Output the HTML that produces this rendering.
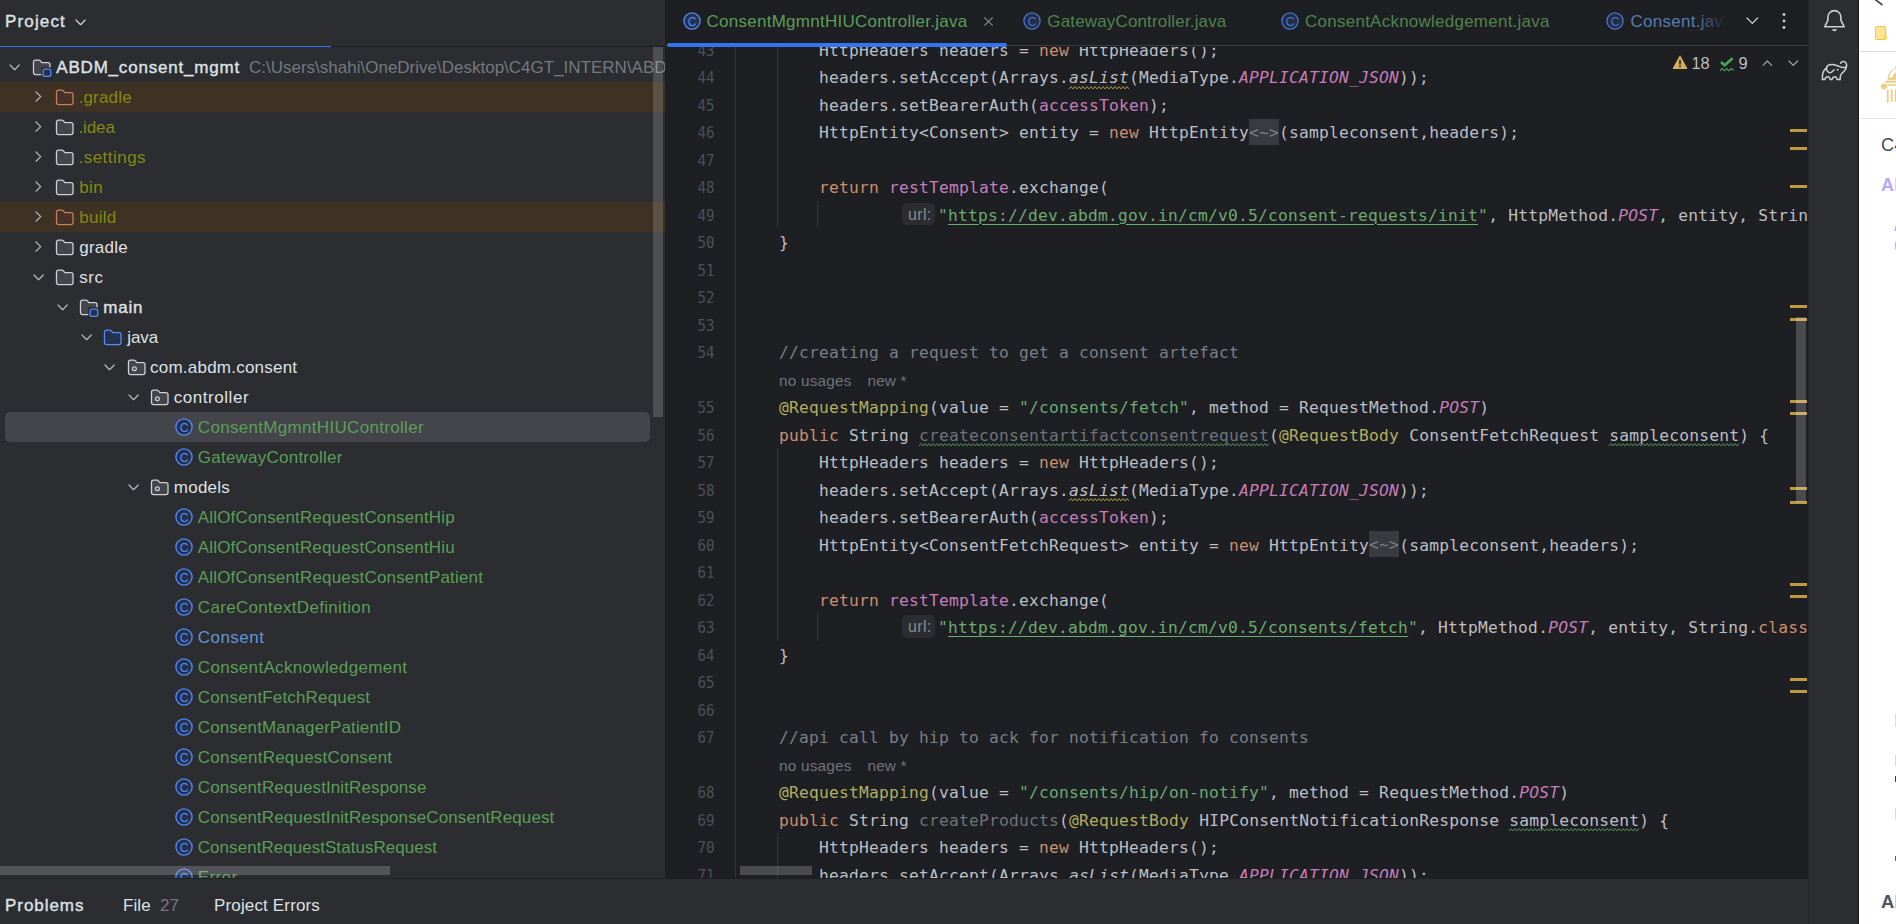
<!DOCTYPE html>
<html lang="en"><head><meta charset="utf-8"><title>ABDM_consent_mgmt</title>
<style>
*{box-sizing:border-box}
html,body{margin:0;padding:0;width:1896px;height:924px;overflow:hidden;background:#2b2d30}
body{position:relative;font-family:"Liberation Sans", "DejaVu Sans", sans-serif;font-size:17px;color:#dfe1e5;letter-spacing:.2px}
.abs{position:absolute}
#left{position:absolute;left:0;top:0;width:665px;height:879px;background:#2b2d30;overflow:hidden}
#split{position:absolute;left:665px;top:0;width:1px;height:879px;background:#1e1f22}
#editor{position:absolute;left:666px;top:0;width:1142px;height:879px;background:#1e1f22;overflow:hidden}
#strip{position:absolute;left:1808px;top:0;width:51px;height:924px;background:#2b2d30;border-left:1px solid #222427;border-right:1px solid #1e1f22}
#white{position:absolute;left:1859px;top:0;width:37px;height:924px;background:#fff;overflow:hidden}
#bottom{position:absolute;left:0;top:878px;width:1808px;height:46px;background:#2b2d30;border-top:1px solid #1e1f22}
.row{position:absolute;left:0;width:653px;height:30px;line-height:30px;white-space:nowrap}
.row .t{position:absolute;top:1px}
.row svg{position:absolute}
.code{position:absolute;left:73px;height:27.5px;line-height:27.5px;white-space:pre;font-family:"DejaVu Sans Mono", "Liberation Mono", monospace;font-size:16.25px;letter-spacing:.218px;color:#bcbec4;padding-top:1px}
.ln{position:absolute;left:0;width:48.3px;text-align:right;height:27.5px;line-height:27.5px;font-family:"DejaVu Sans Mono", "Liberation Mono", monospace;font-size:16.25px;letter-spacing:-.2px;color:#4b5059;padding-top:1px;transform:scaleX(.87);transform-origin:100% 50%}
.k{color:#cf8e6d} .s{color:#6aab73} .c{color:#7a7e85} .a{color:#b3ae60} .f{color:#c77dbb}
.fi{color:#c77dbb;font-style:italic} .i{font-style:italic} .u{color:#6f737a}
.url{text-decoration:underline;text-decoration-thickness:1px;text-underline-offset:3px}
.wy{text-decoration:underline wavy #b8a13f;text-decoration-thickness:1px;text-underline-offset:3px}
.wg{text-decoration:underline wavy #5d9c60;text-decoration-thickness:1px;text-underline-offset:3px}
.w{position:relative} .wv{position:absolute;left:0;top:17.6px;overflow:visible}
.fold{background:#393b40;color:#7a7e85;padding:4.2px 0 2.6px}
.hint{display:inline-block;width:33.4px;height:22.4px;line-height:24.6px;vertical-align:top;margin-top:1.4px;background:#2b2d30;color:#868a91;border-radius:5px;font-family:"Liberation Sans", "DejaVu Sans", sans-serif;font-size:16px;letter-spacing:.35px;padding:0 0 0 6.5px;margin-right:3.1px;margin-left:2.5px}
.inlay{position:absolute;left:113px;height:27.5px;line-height:27.5px;white-space:pre;font-family:"Liberation Sans", "DejaVu Sans", sans-serif;font-size:15.4px;letter-spacing:.18px;color:#6f737a;padding-top:1px}
.guide{position:absolute;width:1px;background:#313438}
.mark{position:absolute;left:1124px;width:17px;height:3px;background:#be9a45}
.tab{position:absolute;top:1px;height:43px;line-height:42px;white-space:nowrap;font-size:17px}
</style></head>
<body>
<div id="left">
<div class="abs" style="left:5px;top:1px;height:42px;line-height:42px;-webkit-text-stroke:.38px #dfe1e5;letter-spacing:1.15px;color:#dfe1e5">Project</div>
<svg class="abs" style="left:73.60px;top:17.75px" width="13.20" height="8.70" viewBox="-2 -2 13.20 8.70"><path d="M0 0 L4.60 4.70 L9.20 0" fill="none" stroke="#ced0d6" stroke-width="1.25" stroke-linecap="round" stroke-linejoin="round"/></svg>
<div class="abs" style="left:0;top:46px;width:665px;height:1px;background:#1e1f22"></div>
<div class="abs" style="left:0;top:45.5px;width:331px;height:1.5px;background:#3574f0"></div>
<div class="row" style="top:52px">
<svg class="abs" style="left:8.30px;top:10.65px" width="13.20" height="8.70" viewBox="-2 -2 13.20 8.70"><path d="M0 0 L4.60 4.70 L9.20 0" fill="none" stroke="#b4b8bf" stroke-width="1.25" stroke-linecap="round" stroke-linejoin="round"/></svg>
<svg style="left:31.15px;top:5.5px" width="22" height="20" viewBox="0 0 22 20"><path transform="translate(1,1)" d="M1.5 3.2 Q1.5 1.2 3.5 1.2 L7 1.2 Q7.8 1.2 8.4 1.9 L9.9 3.7 L16 3.7 Q18 3.7 18 5.7 L18 13.6 Q18 15.6 16 15.6 L3.5 15.6 Q1.5 15.6 1.5 13.6 Z" fill="#43454a" stroke="#ced0d6" stroke-width="1.3" stroke-linejoin="round"/><rect x="10.3" y="9.3" width="11" height="10.4" fill="#2b2d30"/><rect x="12.2" y="11.2" width="7.6" height="7.2" rx="2" fill="#25324d" stroke="#548af7" stroke-width="1.3"/></svg>
<span class="t" style="left:56.30px;color:#dfe1e5;-webkit-text-stroke:.38px #dfe1e5;letter-spacing:.8px;">ABDM_consent_mgmt</span>
<span class="t" style="left:249px;color:#757980;letter-spacing:0">C:\Users\shahi\OneDrive\Desktop\C4GT_INTERN\ABDM_consent_mgmt</span>
</div>
<div class="abs" style="left:0;top:82px;width:665px;height:30px;background:#3d3223"></div>
<div class="row" style="top:82px">
<svg class="abs" style="left:34.45px;top:8.40px" width="8.70" height="13.20" viewBox="-2 -2 8.70 13.20"><path d="M0 0 L4.70 4.60 L0 9.20" fill="none" stroke="#b4b8bf" stroke-width="1.25" stroke-linecap="round" stroke-linejoin="round"/></svg>
<svg style="left:54.95px;top:6.5px" width="20" height="17" viewBox="0 0 20 17"><path d="M1.5 3.2 Q1.5 1.2 3.5 1.2 L7 1.2 Q7.8 1.2 8.4 1.9 L9.9 3.7 L16 3.7 Q18 3.7 18 5.7 L18 13.6 Q18 15.6 16 15.6 L3.5 15.6 Q1.5 15.6 1.5 13.6 Z" fill="#45322b" stroke="#c77d55" stroke-width="1.3" stroke-linejoin="round"/></svg>
<span class="t" style="left:78.50px;color:#868714;letter-spacing:0.186px;">.gradle</span>
</div>
<div class="row" style="top:112px">
<svg class="abs" style="left:34.45px;top:8.40px" width="8.70" height="13.20" viewBox="-2 -2 8.70 13.20"><path d="M0 0 L4.70 4.60 L0 9.20" fill="none" stroke="#b4b8bf" stroke-width="1.25" stroke-linecap="round" stroke-linejoin="round"/></svg>
<svg style="left:54.95px;top:6.5px" width="20" height="17" viewBox="0 0 20 17"><path d="M1.5 3.2 Q1.5 1.2 3.5 1.2 L7 1.2 Q7.8 1.2 8.4 1.9 L9.9 3.7 L16 3.7 Q18 3.7 18 5.7 L18 13.6 Q18 15.6 16 15.6 L3.5 15.6 Q1.5 15.6 1.5 13.6 Z" fill="#43454a" stroke="#ced0d6" stroke-width="1.3" stroke-linejoin="round"/></svg>
<span class="t" style="left:78.50px;color:#868714;letter-spacing:-0.119px;">.idea</span>
</div>
<div class="row" style="top:142px">
<svg class="abs" style="left:34.45px;top:8.40px" width="8.70" height="13.20" viewBox="-2 -2 8.70 13.20"><path d="M0 0 L4.70 4.60 L0 9.20" fill="none" stroke="#b4b8bf" stroke-width="1.25" stroke-linecap="round" stroke-linejoin="round"/></svg>
<svg style="left:54.95px;top:6.5px" width="20" height="17" viewBox="0 0 20 17"><path d="M1.5 3.2 Q1.5 1.2 3.5 1.2 L7 1.2 Q7.8 1.2 8.4 1.9 L9.9 3.7 L16 3.7 Q18 3.7 18 5.7 L18 13.6 Q18 15.6 16 15.6 L3.5 15.6 Q1.5 15.6 1.5 13.6 Z" fill="#43454a" stroke="#ced0d6" stroke-width="1.3" stroke-linejoin="round"/></svg>
<span class="t" style="left:78.50px;color:#868714;letter-spacing:0.473px;">.settings</span>
</div>
<div class="row" style="top:172px">
<svg class="abs" style="left:34.45px;top:8.40px" width="8.70" height="13.20" viewBox="-2 -2 8.70 13.20"><path d="M0 0 L4.70 4.60 L0 9.20" fill="none" stroke="#b4b8bf" stroke-width="1.25" stroke-linecap="round" stroke-linejoin="round"/></svg>
<svg style="left:54.95px;top:6.5px" width="20" height="17" viewBox="0 0 20 17"><path d="M1.5 3.2 Q1.5 1.2 3.5 1.2 L7 1.2 Q7.8 1.2 8.4 1.9 L9.9 3.7 L16 3.7 Q18 3.7 18 5.7 L18 13.6 Q18 15.6 16 15.6 L3.5 15.6 Q1.5 15.6 1.5 13.6 Z" fill="#43454a" stroke="#ced0d6" stroke-width="1.3" stroke-linejoin="round"/></svg>
<span class="t" style="left:79.30px;color:#868714;letter-spacing:0.306px;">bin</span>
</div>
<div class="abs" style="left:0;top:202px;width:665px;height:30px;background:#3d3223"></div>
<div class="row" style="top:202px">
<svg class="abs" style="left:34.45px;top:8.40px" width="8.70" height="13.20" viewBox="-2 -2 8.70 13.20"><path d="M0 0 L4.70 4.60 L0 9.20" fill="none" stroke="#b4b8bf" stroke-width="1.25" stroke-linecap="round" stroke-linejoin="round"/></svg>
<svg style="left:54.95px;top:6.5px" width="20" height="17" viewBox="0 0 20 17"><path d="M1.5 3.2 Q1.5 1.2 3.5 1.2 L7 1.2 Q7.8 1.2 8.4 1.9 L9.9 3.7 L16 3.7 Q18 3.7 18 5.7 L18 13.6 Q18 15.6 16 15.6 L3.5 15.6 Q1.5 15.6 1.5 13.6 Z" fill="#45322b" stroke="#c77d55" stroke-width="1.3" stroke-linejoin="round"/></svg>
<span class="t" style="left:79.30px;color:#868714;letter-spacing:0.22px;">build</span>
</div>
<div class="row" style="top:232px">
<svg class="abs" style="left:34.45px;top:8.40px" width="8.70" height="13.20" viewBox="-2 -2 8.70 13.20"><path d="M0 0 L4.70 4.60 L0 9.20" fill="none" stroke="#b4b8bf" stroke-width="1.25" stroke-linecap="round" stroke-linejoin="round"/></svg>
<svg style="left:54.95px;top:6.5px" width="20" height="17" viewBox="0 0 20 17"><path d="M1.5 3.2 Q1.5 1.2 3.5 1.2 L7 1.2 Q7.8 1.2 8.4 1.9 L9.9 3.7 L16 3.7 Q18 3.7 18 5.7 L18 13.6 Q18 15.6 16 15.6 L3.5 15.6 Q1.5 15.6 1.5 13.6 Z" fill="#43454a" stroke="#ced0d6" stroke-width="1.3" stroke-linejoin="round"/></svg>
<span class="t" style="left:79.30px;color:#dfe1e5;letter-spacing:0.207px;">gradle</span>
</div>
<div class="row" style="top:262px">
<svg class="abs" style="left:32.20px;top:10.65px" width="13.20" height="8.70" viewBox="-2 -2 13.20 8.70"><path d="M0 0 L4.60 4.70 L9.20 0" fill="none" stroke="#b4b8bf" stroke-width="1.25" stroke-linecap="round" stroke-linejoin="round"/></svg>
<svg style="left:54.95px;top:6.5px" width="20" height="17" viewBox="0 0 20 17"><path d="M1.5 3.2 Q1.5 1.2 3.5 1.2 L7 1.2 Q7.8 1.2 8.4 1.9 L9.9 3.7 L16 3.7 Q18 3.7 18 5.7 L18 13.6 Q18 15.6 16 15.6 L3.5 15.6 Q1.5 15.6 1.5 13.6 Z" fill="#43454a" stroke="#ced0d6" stroke-width="1.3" stroke-linejoin="round"/></svg>
<span class="t" style="left:79.30px;color:#dfe1e5;letter-spacing:0.564px;">src</span>
</div>
<div class="row" style="top:292px">
<svg class="abs" style="left:56.30px;top:10.65px" width="13.20" height="8.70" viewBox="-2 -2 13.20 8.70"><path d="M0 0 L4.60 4.70 L9.20 0" fill="none" stroke="#b4b8bf" stroke-width="1.25" stroke-linecap="round" stroke-linejoin="round"/></svg>
<svg style="left:78.05px;top:5.5px" width="22" height="20" viewBox="0 0 22 20"><path transform="translate(1,1)" d="M1.5 3.2 Q1.5 1.2 3.5 1.2 L7 1.2 Q7.8 1.2 8.4 1.9 L9.9 3.7 L16 3.7 Q18 3.7 18 5.7 L18 13.6 Q18 15.6 16 15.6 L3.5 15.6 Q1.5 15.6 1.5 13.6 Z" fill="#43454a" stroke="#ced0d6" stroke-width="1.3" stroke-linejoin="round"/><rect x="10.3" y="9.3" width="11" height="10.4" fill="#2b2d30"/><rect x="12.2" y="11.2" width="7.6" height="7.2" rx="2" fill="#25324d" stroke="#548af7" stroke-width="1.3"/></svg>
<span class="t" style="left:103.30px;color:#dfe1e5;-webkit-text-stroke:.38px #dfe1e5;letter-spacing:.8px;">main</span>
</div>
<div class="row" style="top:322px">
<svg class="abs" style="left:80.30px;top:10.65px" width="13.20" height="8.70" viewBox="-2 -2 13.20 8.70"><path d="M0 0 L4.60 4.70 L9.20 0" fill="none" stroke="#b4b8bf" stroke-width="1.25" stroke-linecap="round" stroke-linejoin="round"/></svg>
<svg style="left:103.15px;top:6.5px" width="20" height="17" viewBox="0 0 20 17"><path d="M1.5 3.2 Q1.5 1.2 3.5 1.2 L7 1.2 Q7.8 1.2 8.4 1.9 L9.9 3.7 L16 3.7 Q18 3.7 18 5.7 L18 13.6 Q18 15.6 16 15.6 L3.5 15.6 Q1.5 15.6 1.5 13.6 Z" fill="#25324d" stroke="#548af7" stroke-width="1.3" stroke-linejoin="round"/></svg>
<span class="t" style="left:127.30px;color:#dfe1e5;letter-spacing:-0.129px;">java</span>
</div>
<div class="row" style="top:352px">
<svg class="abs" style="left:103.40px;top:10.65px" width="13.20" height="8.70" viewBox="-2 -2 13.20 8.70"><path d="M0 0 L4.60 4.70 L9.20 0" fill="none" stroke="#b4b8bf" stroke-width="1.25" stroke-linecap="round" stroke-linejoin="round"/></svg>
<svg style="left:127.05px;top:6.5px" width="20" height="17" viewBox="0 0 20 17"><path d="M1.5 3.2 Q1.5 1.2 3.5 1.2 L7 1.2 Q7.8 1.2 8.4 1.9 L9.9 3.7 L16 3.7 Q18 3.7 18 5.7 L18 13.6 Q18 15.6 16 15.6 L3.5 15.6 Q1.5 15.6 1.5 13.6 Z" fill="#43454a" stroke="#ced0d6" stroke-width="1.3" stroke-linejoin="round"/><circle cx="7.4" cy="9.7" r="1.9" fill="none" stroke="#ced0d6" stroke-width="1.25"/></svg>
<span class="t" style="left:150.00px;color:#dfe1e5;letter-spacing:0.231px;">com.abdm.consent</span>
</div>
<div class="row" style="top:382px">
<svg class="abs" style="left:127.40px;top:10.65px" width="13.20" height="8.70" viewBox="-2 -2 13.20 8.70"><path d="M0 0 L4.60 4.70 L9.20 0" fill="none" stroke="#b4b8bf" stroke-width="1.25" stroke-linecap="round" stroke-linejoin="round"/></svg>
<svg style="left:150.05px;top:6.5px" width="20" height="17" viewBox="0 0 20 17"><path d="M1.5 3.2 Q1.5 1.2 3.5 1.2 L7 1.2 Q7.8 1.2 8.4 1.9 L9.9 3.7 L16 3.7 Q18 3.7 18 5.7 L18 13.6 Q18 15.6 16 15.6 L3.5 15.6 Q1.5 15.6 1.5 13.6 Z" fill="#43454a" stroke="#ced0d6" stroke-width="1.3" stroke-linejoin="round"/><circle cx="7.4" cy="9.7" r="1.9" fill="none" stroke="#ced0d6" stroke-width="1.25"/></svg>
<span class="t" style="left:173.80px;color:#dfe1e5;letter-spacing:0.542px;">controller</span>
</div>
<div class="abs" style="left:5px;top:412px;width:645px;height:30px;background:#43454a;border-radius:5px"></div>
<div class="row" style="top:412px">
<svg style="left:173.64999999999998px;top:5px" width="20" height="20" viewBox="0 0 20 20"><circle cx="10" cy="10" r="8.1" fill="#25324d" stroke="#548af7" stroke-width="1.3"/><text x="10.2" y="14.6" text-anchor="middle" font-family='"Liberation Sans", sans-serif' font-size="12.2" fill="#548af7" letter-spacing="0">C</text></svg>
<span class="t" style="left:197.80px;color:#5c9d58;letter-spacing:0.315px;">ConsentMgmntHIUController</span>
</div>
<div class="row" style="top:442px">
<svg style="left:173.64999999999998px;top:5px" width="20" height="20" viewBox="0 0 20 20"><circle cx="10" cy="10" r="8.1" fill="#25324d" stroke="#548af7" stroke-width="1.3"/><text x="10.2" y="14.6" text-anchor="middle" font-family='"Liberation Sans", sans-serif' font-size="12.2" fill="#548af7" letter-spacing="0">C</text></svg>
<span class="t" style="left:197.80px;color:#5c9d58;letter-spacing:0.232px;">GatewayController</span>
</div>
<div class="row" style="top:472px">
<svg class="abs" style="left:127.40px;top:10.65px" width="13.20" height="8.70" viewBox="-2 -2 13.20 8.70"><path d="M0 0 L4.60 4.70 L9.20 0" fill="none" stroke="#b4b8bf" stroke-width="1.25" stroke-linecap="round" stroke-linejoin="round"/></svg>
<svg style="left:150.05px;top:6.5px" width="20" height="17" viewBox="0 0 20 17"><path d="M1.5 3.2 Q1.5 1.2 3.5 1.2 L7 1.2 Q7.8 1.2 8.4 1.9 L9.9 3.7 L16 3.7 Q18 3.7 18 5.7 L18 13.6 Q18 15.6 16 15.6 L3.5 15.6 Q1.5 15.6 1.5 13.6 Z" fill="#43454a" stroke="#ced0d6" stroke-width="1.3" stroke-linejoin="round"/><circle cx="7.4" cy="9.7" r="1.9" fill="none" stroke="#ced0d6" stroke-width="1.25"/></svg>
<span class="t" style="left:173.80px;color:#dfe1e5;letter-spacing:0.237px;">models</span>
</div>
<div class="row" style="top:502px">
<svg style="left:173.64999999999998px;top:5px" width="20" height="20" viewBox="0 0 20 20"><circle cx="10" cy="10" r="8.1" fill="#25324d" stroke="#548af7" stroke-width="1.3"/><text x="10.2" y="14.6" text-anchor="middle" font-family='"Liberation Sans", sans-serif' font-size="12.2" fill="#548af7" letter-spacing="0">C</text></svg>
<span class="t" style="left:197.80px;color:#5c9d58;letter-spacing:0.164px;">AllOfConsentRequestConsentHip</span>
</div>
<div class="row" style="top:532px">
<svg style="left:173.64999999999998px;top:5px" width="20" height="20" viewBox="0 0 20 20"><circle cx="10" cy="10" r="8.1" fill="#25324d" stroke="#548af7" stroke-width="1.3"/><text x="10.2" y="14.6" text-anchor="middle" font-family='"Liberation Sans", sans-serif' font-size="12.2" fill="#548af7" letter-spacing="0">C</text></svg>
<span class="t" style="left:197.80px;color:#5c9d58;letter-spacing:0.164px;">AllOfConsentRequestConsentHiu</span>
</div>
<div class="row" style="top:562px">
<svg style="left:173.64999999999998px;top:5px" width="20" height="20" viewBox="0 0 20 20"><circle cx="10" cy="10" r="8.1" fill="#25324d" stroke="#548af7" stroke-width="1.3"/><text x="10.2" y="14.6" text-anchor="middle" font-family='"Liberation Sans", sans-serif' font-size="12.2" fill="#548af7" letter-spacing="0">C</text></svg>
<span class="t" style="left:197.80px;color:#5c9d58;letter-spacing:0.168px;">AllOfConsentRequestConsentPatient</span>
</div>
<div class="row" style="top:592px">
<svg style="left:173.64999999999998px;top:5px" width="20" height="20" viewBox="0 0 20 20"><circle cx="10" cy="10" r="8.1" fill="#25324d" stroke="#548af7" stroke-width="1.3"/><text x="10.2" y="14.6" text-anchor="middle" font-family='"Liberation Sans", sans-serif' font-size="12.2" fill="#548af7" letter-spacing="0">C</text></svg>
<span class="t" style="left:197.80px;color:#5c9d58;letter-spacing:0.324px;">CareContextDefinition</span>
</div>
<div class="row" style="top:622px">
<svg style="left:173.64999999999998px;top:5px" width="20" height="20" viewBox="0 0 20 20"><circle cx="10" cy="10" r="8.1" fill="#25324d" stroke="#548af7" stroke-width="1.3"/><text x="10.2" y="14.6" text-anchor="middle" font-family='"Liberation Sans", sans-serif' font-size="12.2" fill="#548af7" letter-spacing="0">C</text></svg>
<span class="t" style="left:197.80px;color:#6595d1;letter-spacing:0.462px;">Consent</span>
</div>
<div class="row" style="top:652px">
<svg style="left:173.64999999999998px;top:5px" width="20" height="20" viewBox="0 0 20 20"><circle cx="10" cy="10" r="8.1" fill="#25324d" stroke="#548af7" stroke-width="1.3"/><text x="10.2" y="14.6" text-anchor="middle" font-family='"Liberation Sans", sans-serif' font-size="12.2" fill="#548af7" letter-spacing="0">C</text></svg>
<span class="t" style="left:197.80px;color:#5c9d58;letter-spacing:0.332px;">ConsentAcknowledgement</span>
</div>
<div class="row" style="top:682px">
<svg style="left:173.64999999999998px;top:5px" width="20" height="20" viewBox="0 0 20 20"><circle cx="10" cy="10" r="8.1" fill="#25324d" stroke="#548af7" stroke-width="1.3"/><text x="10.2" y="14.6" text-anchor="middle" font-family='"Liberation Sans", sans-serif' font-size="12.2" fill="#548af7" letter-spacing="0">C</text></svg>
<span class="t" style="left:197.80px;color:#5c9d58;letter-spacing:0.164px;">ConsentFetchRequest</span>
</div>
<div class="row" style="top:712px">
<svg style="left:173.64999999999998px;top:5px" width="20" height="20" viewBox="0 0 20 20"><circle cx="10" cy="10" r="8.1" fill="#25324d" stroke="#548af7" stroke-width="1.3"/><text x="10.2" y="14.6" text-anchor="middle" font-family='"Liberation Sans", sans-serif' font-size="12.2" fill="#548af7" letter-spacing="0">C</text></svg>
<span class="t" style="left:197.80px;color:#5c9d58;letter-spacing:0.13px;">ConsentManagerPatientID</span>
</div>
<div class="row" style="top:742px">
<svg style="left:173.64999999999998px;top:5px" width="20" height="20" viewBox="0 0 20 20"><circle cx="10" cy="10" r="8.1" fill="#25324d" stroke="#548af7" stroke-width="1.3"/><text x="10.2" y="14.6" text-anchor="middle" font-family='"Liberation Sans", sans-serif' font-size="12.2" fill="#548af7" letter-spacing="0">C</text></svg>
<span class="t" style="left:197.80px;color:#5c9d58;letter-spacing:0.217px;">ConsentRequestConsent</span>
</div>
<div class="row" style="top:772px">
<svg style="left:173.64999999999998px;top:5px" width="20" height="20" viewBox="0 0 20 20"><circle cx="10" cy="10" r="8.1" fill="#25324d" stroke="#548af7" stroke-width="1.3"/><text x="10.2" y="14.6" text-anchor="middle" font-family='"Liberation Sans", sans-serif' font-size="12.2" fill="#548af7" letter-spacing="0">C</text></svg>
<span class="t" style="left:197.80px;color:#5c9d58;letter-spacing:0.109px;">ConsentRequestInitResponse</span>
</div>
<div class="row" style="top:802px">
<svg style="left:173.64999999999998px;top:5px" width="20" height="20" viewBox="0 0 20 20"><circle cx="10" cy="10" r="8.1" fill="#25324d" stroke="#548af7" stroke-width="1.3"/><text x="10.2" y="14.6" text-anchor="middle" font-family='"Liberation Sans", sans-serif' font-size="12.2" fill="#548af7" letter-spacing="0">C</text></svg>
<span class="t" style="left:197.80px;color:#5c9d58;letter-spacing:0.102px;">ConsentRequestInitResponseConsentRequest</span>
</div>
<div class="row" style="top:832px">
<svg style="left:173.64999999999998px;top:5px" width="20" height="20" viewBox="0 0 20 20"><circle cx="10" cy="10" r="8.1" fill="#25324d" stroke="#548af7" stroke-width="1.3"/><text x="10.2" y="14.6" text-anchor="middle" font-family='"Liberation Sans", sans-serif' font-size="12.2" fill="#548af7" letter-spacing="0">C</text></svg>
<span class="t" style="left:197.80px;color:#5c9d58;letter-spacing:0.04px;">ConsentRequestStatusRequest</span>
</div>
<div class="row" style="top:862px">
<svg style="left:173.64999999999998px;top:5px" width="20" height="20" viewBox="0 0 20 20"><circle cx="10" cy="10" r="8.1" fill="#25324d" stroke="#548af7" stroke-width="1.3"/><text x="10.2" y="14.6" text-anchor="middle" font-family='"Liberation Sans", sans-serif' font-size="12.2" fill="#548af7" letter-spacing="0">C</text></svg>
<span class="t" style="left:197.80px;color:#5c9d58;letter-spacing:0.38px;">Error</span>
</div>
<div class="abs" style="left:653px;top:47px;width:10px;height:370px;background:rgba(255,255,255,.16)"></div>
<div class="abs" style="left:0;top:866.4px;width:389.8px;height:8.8px;background:rgba(255,255,255,.19)"></div>
</div><div id="split"></div>
<div id="editor">
<div class="abs" style="left:0;top:47px;width:1142px;height:832px;overflow:hidden">
<div class="guide" style="left:69px;top:0;height:832px;background:#313438"></div>
<div class="guide" style="left:111px;top:-11.5px;height:192.5px"></div>
<div class="guide" style="left:151px;top:153.5px;height:27.5px"></div>
<div class="guide" style="left:111px;top:401.0px;height:192.5px"></div>
<div class="guide" style="left:151px;top:566.0px;height:27.5px"></div>
<div class="guide" style="left:111px;top:786.0px;height:82.5px"></div>
<div class="ln" style="top:-11.5px">43</div>
<div class="code" style="top:-11.5px">        HttpHeaders headers = <span class="k">new</span> HttpHeaders();</div>
<div class="ln" style="top:16.0px">44</div>
<div class="code" style="top:16.0px">        headers.setAccept(Arrays.<span class="w i">asList<svg class="wv" width="60" height="4" viewBox="0 0 60 4"><path d="M0 2.9 L2 0.6 L4 2.9 L6 0.6 L8 2.9 L10 0.6 L12 2.9 L14 0.6 L16 2.9 L18 0.6 L20 2.9 L22 0.6 L24 2.9 L26 0.6 L28 2.9 L30 0.6 L32 2.9 L34 0.6 L36 2.9 L38 0.6 L40 2.9 L42 0.6 L44 2.9 L46 0.6 L48 2.9 L50 0.6 L52 2.9 L54 0.6 L56 2.9 L58 0.6 L60 2.9" fill="none" stroke="#b59d3e" stroke-width="1"/></svg></span>(MediaType.<span class="fi">APPLICATION_JSON</span>));</div>
<div class="ln" style="top:43.5px">45</div>
<div class="code" style="top:43.5px">        headers.setBearerAuth(<span class="f">accessToken</span>);</div>
<div class="ln" style="top:71.0px">46</div>
<div class="code" style="top:71.0px">        HttpEntity&lt;Consent&gt; entity = <span class="k">new</span> HttpEntity<span class="fold">&lt;~&gt;</span>(sampleconsent,headers);</div>
<div class="ln" style="top:98.5px">47</div>
<div class="ln" style="top:126.0px">48</div>
<div class="code" style="top:126.0px">        <span class="k">return</span> <span class="f">restTemplate</span>.exchange(</div>
<div class="ln" style="top:153.5px">49</div>
<div class="code" style="top:153.5px">                <span class="hint">url:</span><span class="s">"<span class="url">https://dev.abdm.gov.in/cm/v0.5/consent-requests/init</span>"</span>, HttpMethod.<span class="fi">POST</span>, entity, String.<span class="k">class</span>);</div>
<div class="ln" style="top:181.0px">50</div>
<div class="code" style="top:181.0px">    }</div>
<div class="ln" style="top:208.5px">51</div>
<div class="ln" style="top:236.0px">52</div>
<div class="ln" style="top:263.5px">53</div>
<div class="ln" style="top:291.0px">54</div>
<div class="code" style="top:291.0px">    <span class="c">//creating a request to get a consent artefact</span></div>
<div class="ln" style="top:346.0px">55</div>
<div class="code" style="top:346.0px">    <span class="a">@RequestMapping</span>(value = <span class="s">"/consents/fetch"</span>, method = RequestMethod.<span class="fi">POST</span>)</div>
<div class="ln" style="top:373.5px">56</div>
<div class="code" style="top:373.5px">    <span class="k">public</span> String <span class="w u">createconsentartifactconsentrequest<svg class="wv" width="350" height="4" viewBox="0 0 350 4"><path d="M0 2.9 L2 0.6 L4 2.9 L6 0.6 L8 2.9 L10 0.6 L12 2.9 L14 0.6 L16 2.9 L18 0.6 L20 2.9 L22 0.6 L24 2.9 L26 0.6 L28 2.9 L30 0.6 L32 2.9 L34 0.6 L36 2.9 L38 0.6 L40 2.9 L42 0.6 L44 2.9 L46 0.6 L48 2.9 L50 0.6 L52 2.9 L54 0.6 L56 2.9 L58 0.6 L60 2.9 L62 0.6 L64 2.9 L66 0.6 L68 2.9 L70 0.6 L72 2.9 L74 0.6 L76 2.9 L78 0.6 L80 2.9 L82 0.6 L84 2.9 L86 0.6 L88 2.9 L90 0.6 L92 2.9 L94 0.6 L96 2.9 L98 0.6 L100 2.9 L102 0.6 L104 2.9 L106 0.6 L108 2.9 L110 0.6 L112 2.9 L114 0.6 L116 2.9 L118 0.6 L120 2.9 L122 0.6 L124 2.9 L126 0.6 L128 2.9 L130 0.6 L132 2.9 L134 0.6 L136 2.9 L138 0.6 L140 2.9 L142 0.6 L144 2.9 L146 0.6 L148 2.9 L150 0.6 L152 2.9 L154 0.6 L156 2.9 L158 0.6 L160 2.9 L162 0.6 L164 2.9 L166 0.6 L168 2.9 L170 0.6 L172 2.9 L174 0.6 L176 2.9 L178 0.6 L180 2.9 L182 0.6 L184 2.9 L186 0.6 L188 2.9 L190 0.6 L192 2.9 L194 0.6 L196 2.9 L198 0.6 L200 2.9 L202 0.6 L204 2.9 L206 0.6 L208 2.9 L210 0.6 L212 2.9 L214 0.6 L216 2.9 L218 0.6 L220 2.9 L222 0.6 L224 2.9 L226 0.6 L228 2.9 L230 0.6 L232 2.9 L234 0.6 L236 2.9 L238 0.6 L240 2.9 L242 0.6 L244 2.9 L246 0.6 L248 2.9 L250 0.6 L252 2.9 L254 0.6 L256 2.9 L258 0.6 L260 2.9 L262 0.6 L264 2.9 L266 0.6 L268 2.9 L270 0.6 L272 2.9 L274 0.6 L276 2.9 L278 0.6 L280 2.9 L282 0.6 L284 2.9 L286 0.6 L288 2.9 L290 0.6 L292 2.9 L294 0.6 L296 2.9 L298 0.6 L300 2.9 L302 0.6 L304 2.9 L306 0.6 L308 2.9 L310 0.6 L312 2.9 L314 0.6 L316 2.9 L318 0.6 L320 2.9 L322 0.6 L324 2.9 L326 0.6 L328 2.9 L330 0.6 L332 2.9 L334 0.6 L336 2.9 L338 0.6 L340 2.9 L342 0.6 L344 2.9 L346 0.6 L348 2.9 L350 0.6" fill="none" stroke="#55995a" stroke-width="1"/></svg></span>(<span class="a">@RequestBody</span> ConsentFetchRequest <span class="w ">sampleconsent<svg class="wv" width="130" height="4" viewBox="0 0 130 4"><path d="M0 2.9 L2 0.6 L4 2.9 L6 0.6 L8 2.9 L10 0.6 L12 2.9 L14 0.6 L16 2.9 L18 0.6 L20 2.9 L22 0.6 L24 2.9 L26 0.6 L28 2.9 L30 0.6 L32 2.9 L34 0.6 L36 2.9 L38 0.6 L40 2.9 L42 0.6 L44 2.9 L46 0.6 L48 2.9 L50 0.6 L52 2.9 L54 0.6 L56 2.9 L58 0.6 L60 2.9 L62 0.6 L64 2.9 L66 0.6 L68 2.9 L70 0.6 L72 2.9 L74 0.6 L76 2.9 L78 0.6 L80 2.9 L82 0.6 L84 2.9 L86 0.6 L88 2.9 L90 0.6 L92 2.9 L94 0.6 L96 2.9 L98 0.6 L100 2.9 L102 0.6 L104 2.9 L106 0.6 L108 2.9 L110 0.6 L112 2.9 L114 0.6 L116 2.9 L118 0.6 L120 2.9 L122 0.6 L124 2.9 L126 0.6 L128 2.9 L130 0.6" fill="none" stroke="#55995a" stroke-width="1"/></svg></span>) {</div>
<div class="ln" style="top:401.0px">57</div>
<div class="code" style="top:401.0px">        HttpHeaders headers = <span class="k">new</span> HttpHeaders();</div>
<div class="ln" style="top:428.5px">58</div>
<div class="code" style="top:428.5px">        headers.setAccept(Arrays.<span class="w i">asList<svg class="wv" width="60" height="4" viewBox="0 0 60 4"><path d="M0 2.9 L2 0.6 L4 2.9 L6 0.6 L8 2.9 L10 0.6 L12 2.9 L14 0.6 L16 2.9 L18 0.6 L20 2.9 L22 0.6 L24 2.9 L26 0.6 L28 2.9 L30 0.6 L32 2.9 L34 0.6 L36 2.9 L38 0.6 L40 2.9 L42 0.6 L44 2.9 L46 0.6 L48 2.9 L50 0.6 L52 2.9 L54 0.6 L56 2.9 L58 0.6 L60 2.9" fill="none" stroke="#b59d3e" stroke-width="1"/></svg></span>(MediaType.<span class="fi">APPLICATION_JSON</span>));</div>
<div class="ln" style="top:456.0px">59</div>
<div class="code" style="top:456.0px">        headers.setBearerAuth(<span class="f">accessToken</span>);</div>
<div class="ln" style="top:483.5px">60</div>
<div class="code" style="top:483.5px">        HttpEntity&lt;ConsentFetchRequest&gt; entity = <span class="k">new</span> HttpEntity<span class="fold">&lt;~&gt;</span>(sampleconsent,headers);</div>
<div class="ln" style="top:511.0px">61</div>
<div class="ln" style="top:538.5px">62</div>
<div class="code" style="top:538.5px">        <span class="k">return</span> <span class="f">restTemplate</span>.exchange(</div>
<div class="ln" style="top:566.0px">63</div>
<div class="code" style="top:566.0px">                <span class="hint">url:</span><span class="s">"<span class="url">https://dev.abdm.gov.in/cm/v0.5/consents/fetch</span>"</span>, HttpMethod.<span class="fi">POST</span>, entity, String.<span class="k">class</span>);</div>
<div class="ln" style="top:593.5px">64</div>
<div class="code" style="top:593.5px">    }</div>
<div class="ln" style="top:621.0px">65</div>
<div class="ln" style="top:648.5px">66</div>
<div class="ln" style="top:676.0px">67</div>
<div class="code" style="top:676.0px">    <span class="c">//api call by hip to ack for notification fo consents</span></div>
<div class="ln" style="top:731.0px">68</div>
<div class="code" style="top:731.0px">    <span class="a">@RequestMapping</span>(value = <span class="s">"/consents/hip/on-notify"</span>, method = RequestMethod.<span class="fi">POST</span>)</div>
<div class="ln" style="top:758.5px">69</div>
<div class="code" style="top:758.5px">    <span class="k">public</span> String <span class="u">createProducts</span>(<span class="a">@RequestBody</span> HIPConsentNotificationResponse <span class="w ">sampleconsent<svg class="wv" width="130" height="4" viewBox="0 0 130 4"><path d="M0 2.9 L2 0.6 L4 2.9 L6 0.6 L8 2.9 L10 0.6 L12 2.9 L14 0.6 L16 2.9 L18 0.6 L20 2.9 L22 0.6 L24 2.9 L26 0.6 L28 2.9 L30 0.6 L32 2.9 L34 0.6 L36 2.9 L38 0.6 L40 2.9 L42 0.6 L44 2.9 L46 0.6 L48 2.9 L50 0.6 L52 2.9 L54 0.6 L56 2.9 L58 0.6 L60 2.9 L62 0.6 L64 2.9 L66 0.6 L68 2.9 L70 0.6 L72 2.9 L74 0.6 L76 2.9 L78 0.6 L80 2.9 L82 0.6 L84 2.9 L86 0.6 L88 2.9 L90 0.6 L92 2.9 L94 0.6 L96 2.9 L98 0.6 L100 2.9 L102 0.6 L104 2.9 L106 0.6 L108 2.9 L110 0.6 L112 2.9 L114 0.6 L116 2.9 L118 0.6 L120 2.9 L122 0.6 L124 2.9 L126 0.6 L128 2.9 L130 0.6" fill="none" stroke="#55995a" stroke-width="1"/></svg></span>) {</div>
<div class="ln" style="top:786.0px">70</div>
<div class="code" style="top:786.0px">        HttpHeaders headers = <span class="k">new</span> HttpHeaders();</div>
<div class="ln" style="top:813.5px">71</div>
<div class="code" style="top:813.5px">        headers.setAccept(Arrays.<span class="w i">asList<svg class="wv" width="60" height="4" viewBox="0 0 60 4"><path d="M0 2.9 L2 0.6 L4 2.9 L6 0.6 L8 2.9 L10 0.6 L12 2.9 L14 0.6 L16 2.9 L18 0.6 L20 2.9 L22 0.6 L24 2.9 L26 0.6 L28 2.9 L30 0.6 L32 2.9 L34 0.6 L36 2.9 L38 0.6 L40 2.9 L42 0.6 L44 2.9 L46 0.6 L48 2.9 L50 0.6 L52 2.9 L54 0.6 L56 2.9 L58 0.6 L60 2.9" fill="none" stroke="#b59d3e" stroke-width="1"/></svg></span>(MediaType.<span class="fi">APPLICATION_JSON</span>));</div>
<div class="inlay" style="top:318.5px">no usages</div>
<div class="inlay" style="top:318.5px;left:201.4px">new *</div>
<div class="inlay" style="top:703.5px">no usages</div>
<div class="inlay" style="top:703.5px;left:201.4px">new *</div>
<div class="mark" style="top:81.80000000000001px"></div>
<div class="mark" style="top:100.30000000000001px"></div>
<div class="mark" style="top:137.9px"></div>
<div class="mark" style="top:258.2px"></div>
<div class="mark" style="top:270.6px"></div>
<div class="mark" style="top:353.0px"></div>
<div class="mark" style="top:365.2px"></div>
<div class="mark" style="top:440.4px"></div>
<div class="mark" style="top:454.1px"></div>
<div class="mark" style="top:535.6px"></div>
<div class="mark" style="top:548.1px"></div>
<div class="mark" style="top:630.5px"></div>
<div class="mark" style="top:642.7px"></div>
<div class="abs" style="left:1129.6px;top:269.9px;width:10.4px;height:184.7px;background:rgba(255,255,255,.2)"></div>
<div class="abs" style="left:74px;top:819.3px;width:71.6px;height:8.7px;background:rgba(255,255,255,.2)"></div>
<div class="abs" style="left:980px;top:0;width:162px;height:34px;background:#1e1f22"></div>
<svg class="abs" style="left:1006px;top:8px" width="16" height="15" viewBox="0 0 16 15"><path d="M8 1.2 L14.6 13.4 L1.4 13.4 Z" fill="#d6ae58" stroke="#d6ae58" stroke-width="1.2" stroke-linejoin="round"/><rect x="7.2" y="5" width="1.6" height="4.6" fill="#1e1f22"/><rect x="7.2" y="10.6" width="1.6" height="1.7" fill="#1e1f22"/></svg>
<div class="abs" style="left:1025.6px;top:4px;height:24px;line-height:24px;font-size:16.4px;color:#bcbec4;letter-spacing:-.2px">18</div>
<svg class="abs" style="left:1052px;top:9px" width="18" height="18" viewBox="0 0 18 18"><path d="M3 6.0 L6.7 9.3 L14.6 2.2" fill="none" stroke="#4aa55a" stroke-width="2.7"/><path d="M2 14.8 L4.1 12.5 L6.4 14.8 L8.6 12.5 L10.9 14.8 L13.2 12.5 L15.5 14.3" fill="none" stroke="#4aa55a" stroke-width="1.1"/></svg>
<div class="abs" style="left:1072.4px;top:4px;height:24px;line-height:24px;font-size:16.4px;color:#bcbec4;letter-spacing:0">9</div>
<svg class="abs" style="left:1094.60px;top:11.80px" width="12.60" height="8.40" viewBox="-2 -2 12.60 8.40"><path d="M0 4.40 L4.30 0 L8.60 4.40" fill="none" stroke="#9da0a8" stroke-width="1.25" stroke-linecap="round" stroke-linejoin="round"/></svg>
<svg class="abs" style="left:1120.60px;top:11.80px" width="12.60" height="8.40" viewBox="-2 -2 12.60 8.40"><path d="M0 0 L4.30 4.40 L8.60 0" fill="none" stroke="#9da0a8" stroke-width="1.25" stroke-linecap="round" stroke-linejoin="round"/></svg>
</div>
<div class="abs" style="left:0;top:0;width:1142px;height:47px;background:#1e1f22"></div>
<div class="abs" style="left:0;top:45px;width:1142px;height:1px;background:#393b40"></div>
<div class="abs" style="left:1px;top:43px;width:340px;height:4px;background:#3574f0;border-radius:2px"></div>
<div class="tab" style="left:16px;top:0;width:20px"><svg style="position:absolute;left:0px;top:11px" width="20" height="20" viewBox="0 0 20 20"><circle cx="10" cy="10" r="8.1" fill="#25324d" stroke="#548af7" stroke-width="1.3"/><text x="10.2" y="14.6" text-anchor="middle" font-family='"Liberation Sans", sans-serif' font-size="12.2" fill="#548af7" letter-spacing="0">C</text></svg></div>
<div class="tab" style="left:40.60px;color:#5c9d58;letter-spacing:0.251px">ConsentMgmntHIUController.java</div>
<div class="tab" style="left:356px;top:0;width:20px;opacity:0.8"><svg style="position:absolute;left:0px;top:11px" width="20" height="20" viewBox="0 0 20 20"><circle cx="10" cy="10" r="8.1" fill="#25324d" stroke="#548af7" stroke-width="1.3"/><text x="10.2" y="14.6" text-anchor="middle" font-family='"Liberation Sans", sans-serif' font-size="12.2" fill="#548af7" letter-spacing="0">C</text></svg></div>
<div class="tab" style="left:381.30px;color:#5c9d58;letter-spacing:0.154px;opacity:0.8">GatewayController.java</div>
<div class="tab" style="left:614px;top:0;width:20px;opacity:0.8"><svg style="position:absolute;left:0px;top:11px" width="20" height="20" viewBox="0 0 20 20"><circle cx="10" cy="10" r="8.1" fill="#25324d" stroke="#548af7" stroke-width="1.3"/><text x="10.2" y="14.6" text-anchor="middle" font-family='"Liberation Sans", sans-serif' font-size="12.2" fill="#548af7" letter-spacing="0">C</text></svg></div>
<div class="tab" style="left:639.10px;color:#5c9d58;letter-spacing:0.24px;opacity:0.8">ConsentAcknowledgement.java</div>
<div class="tab" style="left:939px;top:0;width:20px;opacity:0.8"><svg style="position:absolute;left:0px;top:11px" width="20" height="20" viewBox="0 0 20 20"><circle cx="10" cy="10" r="8.1" fill="#25324d" stroke="#548af7" stroke-width="1.3"/><text x="10.2" y="14.6" text-anchor="middle" font-family='"Liberation Sans", sans-serif' font-size="12.2" fill="#548af7" letter-spacing="0">C</text></svg></div>
<div class="tab" style="left:964.60px;color:#6595d1;letter-spacing:0.25px;opacity:0.8">Consent.java</div>
<div class="abs" style="left:1030px;top:0;width:40px;height:43px;background:linear-gradient(90deg,rgba(30,31,34,0),#1e1f22 75%)"></div>
<div class="abs" style="left:1062px;top:0;width:80px;height:43px;background:#1e1f22"></div>
<svg class="abs" style="left:317px;top:15.5px" width="11" height="11" viewBox="0 0 11 11"><path d="M1.3 1.3 L9.7 9.7 M9.7 1.3 L1.3 9.7" stroke="#868a91" stroke-width="1.2" fill="none"/></svg>
<svg class="abs" style="left:1078.50px;top:16.20px" width="14.60" height="9.40" viewBox="-2 -2 14.60 9.40"><path d="M0 0 L5.30 5.40 L10.60 0" fill="none" stroke="#ced0d6" stroke-width="1.25" stroke-linecap="round" stroke-linejoin="round"/></svg>
<svg class="abs" style="left:1116px;top:12px" width="4" height="18" viewBox="0 0 4 18"><circle cx="2" cy="2.5" r="1.4" fill="#ced0d6"/><circle cx="2" cy="9" r="1.4" fill="#ced0d6"/><circle cx="2" cy="15.5" r="1.4" fill="#ced0d6"/></svg>
</div>
<div id="strip">
<svg class="abs" style="left:7px;top:2px" width="36" height="36" viewBox="0 0 36 36"><path d="M11.9 18.3 L11.9 15.1 A6.5 6.5 0 0 1 24.9 15.1 L24.9 18.3 L28.2 24.7 L8.8 24.7 Z" fill="none" stroke="#ced0d6" stroke-width="1.6" stroke-linejoin="round"/><path d="M15.9 27.2 A2.7 2.9 0 0 0 21.1 27.2 Z" fill="#ced0d6"/></svg>
<svg class="abs" style="left:7px;top:54px" width="36" height="32" viewBox="0 0 36 32"><g fill="none" stroke="#ced0d6" stroke-width="1.5" stroke-linecap="round" stroke-linejoin="round"><path d="M24.7 9.3 C24.9 7.9 26.3 7.3 27.6 7.5 C29.6 7.8 30.6 9.6 30.6 11.6 C30.6 12.6 30.3 13 29.4 13.2 C27.5 13.6 25.5 13.4 23.5 12.6 C21 11.5 19 10.5 16.5 10.4 C13.8 10.3 11.3 11.3 10.6 13.2 C10.2 15 11 17.4 12.6 18.4 C14.5 19.4 16.5 17.5 18 15.9"/><path d="M30.6 11.6 C30.6 14 29.8 15.8 28.2 17.2 C26.5 18.6 24.9 19.6 24.5 21.5 L24 25.6"/><path d="M10.6 13.6 C8.3 15.5 6.4 19 6.4 22.5 L6.5 25.6"/><path d="M6.5 25.6 L8.8 25.6 C9.5 23.6 11 22.8 11.8 22.8 C13 22.8 13.8 24 14.2 25.6 L16 25.6 C16.6 23.6 17.8 22.8 18.8 22.8 C20 22.8 20.8 24 21.2 25.6 L24 25.6"/></g><circle cx="21.6" cy="15.7" r="0.95" fill="#ced0d6"/></svg>
</div>
<div id="white">
<svg class="abs" style="left:10px;top:-8px" width="20" height="16" viewBox="0 0 20 16"><path d="M13.5 1 L5.5 7 L13.5 13" fill="none" stroke="#474a52" stroke-width="1.7"/></svg>
<svg class="abs" style="left:15px;top:25px" width="14" height="16" viewBox="0 0 14 16"><rect x="1.6" y="1.5" width="10" height="13" rx="0.8" fill="#fde68f" stroke="#efc847" stroke-width="1"/><rect x="10.2" y="10.2" width="2.4" height="3.9" rx="1" fill="#fde68f" stroke="#efc847" stroke-width="0.9"/></svg>
<div class="abs" style="left:1px;top:51px;width:38px;height:1px;background:#d9dbde"></div>
<div class="abs" style="left:1px;top:118px;width:38px;height:1px;background:#e4e6e8"></div>
<svg class="abs" style="left:21px;top:64px" width="20" height="42" viewBox="0 0 20 42"><g fill="#e9cf8a"><path d="M15.2 2.2 L17 2.2 L17 4.6 C12.6 5.6 9.6 9 9.2 13.4 L12.4 13.4 C12.8 10.6 14.4 8.6 17 7.8 L17 16 L7.6 16 C7.4 10.4 10.4 6 15.2 4.6 Z"/><rect x="5" y="16.6" width="15" height="2.2"/><rect x="7" y="20.2" width="13" height="1.6"/><circle cx="4" cy="22.6" r="3"/><rect x="6.8" y="25.4" width="1.8" height="13.4"/><rect x="10.8" y="25.4" width="1.8" height="12.4"/><rect x="14.7" y="25.4" width="1.8" height="12.4"/></g></svg>
<div class="abs" style="left:22px;top:133px;font-size:18px;line-height:24px;color:#454a54;white-space:nowrap;letter-spacing:.3px">C4GT</div>
<div class="abs" style="left:22px;top:173px;font-size:18px;line-height:24px;font-weight:bold;color:#b6a9f6;white-space:nowrap">ABDM</div>
<div class="abs" style="left:35.5px;top:225px;width:3px;height:6px;background:#b9a8f3;border-radius:1px;transform:skewX(-15deg)"></div>
<div class="abs" style="left:35.5px;top:241px;width:3px;height:9px;background:#aab6f5;border-radius:2px 0 0 2px"></div>
<div class="abs" style="left:35.6px;top:714px;width:2px;height:12.5px;background:#d8dadf"></div>
<div class="abs" style="left:35.6px;top:754.5px;width:2px;height:11.5px;background:#d8dadf"></div>
<div class="abs" style="left:35.6px;top:776px;width:2px;height:6px;background:#3c4043"></div>
<div class="abs" style="left:35.6px;top:807.7px;width:2px;height:12.3px;background:#d8dadf"></div>
<div class="abs" style="left:35.6px;top:855.8px;width:2px;height:5.5px;background:#5a5d66"></div>
<div class="abs" style="left:22px;top:889.8px;font-size:18.4px;line-height:24px;font-weight:bold;color:#4f5560;white-space:nowrap">ABDM</div>
</div>
<div id="bottom">
<div class="abs" style="left:5px;top:0;height:54px;line-height:54px;-webkit-text-stroke:.38px #dfe1e5;letter-spacing:.95px">Problems</div>
<div class="abs" style="left:123px;top:0;height:54px;line-height:54px;letter-spacing:.1px">File</div>
<div class="abs" style="left:160px;top:0;height:54px;line-height:54px;color:#757980;letter-spacing:0">27</div>
<div class="abs" style="left:214px;top:0;height:54px;line-height:54px;letter-spacing:.15px">Project Errors</div>
</div>
</body></html>
